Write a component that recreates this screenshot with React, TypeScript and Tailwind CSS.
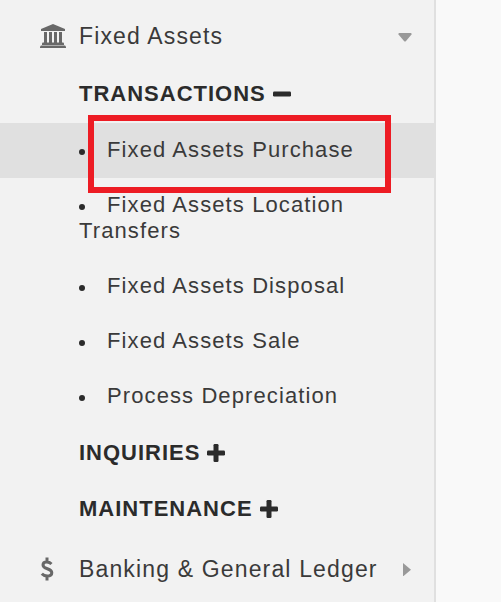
type Section = {
  title: string;
  open: boolean;
  items: string[];
};

const sections: Section[] = [
  {
    title: "TRANSACTIONS",
    open: true,
    items: [
      "Fixed Assets Purchase",
      "Fixed Assets Location Transfers",
      "Fixed Assets Disposal",
      "Fixed Assets Sale",
      "Process Depreciation",
    ],
  },
  { title: "INQUIRIES", open: false, items: [] },
  { title: "MAINTENANCE", open: false, items: [] },
];

const selected = "Fixed Assets Purchase";

function BankIcon() {
  return (
    <svg viewBox="0 0 26 24" className="h-6 w-[26px] fill-[#686868]" aria-hidden="true">
      <path d="M13 0 25 5v2H1V5Z" />
      <path d="M4 8h3v11H4ZM9 8h3v11H9ZM14 8h3v11h-3ZM19 8h3v11h-3Z" />
      <path d="M3 18.500h20q1 0 1 1V21H2v-1.500q0-1 1-1Z" />
      <path d="M1 21.500h24l1 1V24H0v-1.500Z" />
    </svg>
  );
}

function DollarIcon() {
  return (
    <svg viewBox="0 0 14 24" className="h-6 w-3.5 fill-none stroke-[#686868]" aria-hidden="true">
      <path
        d="M7 .5v4M7 19.500v4M11.500 7C10.200 5.700 8.700 5 6.900 5 4.700 5 3 6.100 3 7.900c0 4.600 8.800 3.100 8.800 7.800 0 2-1.900 3.300-4.500 3.300-2.200 0-4.100-.8-5.500-2.300"
        strokeWidth="3"
      />
    </svg>
  );
}

function ToggleIcon({ open }: { open: boolean }) {
  return (
    <svg viewBox="0 0 18 18" className="size-[18px] fill-[#2b2b2b]" aria-hidden="true">
      <rect x="0" y="6.500" width="18" height="5" rx="1.200" />
      {!open && <rect x="6.500" y="0" width="5" height="18" rx="1.200" />}
    </svg>
  );
}

function Caret({ open }: { open: boolean }) {
  return (
    <svg viewBox="0 0 14 14" className="size-3.5 shrink-0 fill-[#999]" aria-hidden="true">
      {open ? <path d="M1 4h12q1 .5.5 1.500L8 12q-1 1-2 0L.5 5.500Q0 4.500 1 4Z" /> : <path d="M5 1v13.500L13 7.750Z" />}
    </svg>
  );
}

export default function App() {
  return (
    <div className="flex min-h-screen bg-[#f9f9f9] font-['Liberation_Sans',Arial,sans-serif] text-[22px] leading-[26px] tracking-wider text-[#3a3a3a]">
      <nav className="w-[87%] shrink-0 border-r-2 border-[#e0e0e0] bg-[#f2f2f2]">
        <button type="button" className="flex w-full items-center pt-[23px] pr-[22px] pb-[18px] pl-10 text-left text-[23px] tracking-wider">
          <span className="flex w-[39px] shrink-0">
            <BankIcon />
          </span>
          <span className="flex-1">Fixed Assets</span>
          <Caret open />
        </button>

        {sections.map((section) => (
          <section key={section.title}>
            <h2>
              <button
                type="button"
                aria-expanded={section.open}
                className="flex w-full items-center gap-[7px] pt-[14px] pb-4 pl-[79px] font-bold tracking-[1px] text-[#2b2b2b]"
              >
                {section.title}
                <ToggleIcon open={section.open} />
              </button>
            </h2>
            {section.items.length > 0 && (
              <ul className="mb-0.5">
                {section.items.map((item) => (
                  <li key={item} className={item === selected ? "relative bg-[#e0e0e0]" : ""}>
                    <a href="#" className="block pt-[14px] pr-2 pb-[15px] pl-[79px]">
                      <span className="mr-[22px] inline-block size-1.5 rounded-full bg-[#2b2b2b] align-[2px]" />
                      {item}
                    </a>
                    {item === selected && (
                      <span className="pointer-events-none absolute -top-2 right-[43px] -bottom-[15px] left-[88px] border-6 border-[#ed1c24]" />
                    )}
                  </li>
                ))}
              </ul>
            )}
          </section>
        ))}

        <button type="button" className="flex w-full items-center pt-[18px] pr-[22px] pb-5 pl-10 text-left text-[23px] tracking-wider">
          <span className="flex w-[39px] shrink-0">
            <DollarIcon />
          </span>
          <span className="flex-1 whitespace-nowrap">Banking &amp; General Ledger</span>
          <Caret open={false} />
        </button>
      </nav>
    </div>
  );
}
